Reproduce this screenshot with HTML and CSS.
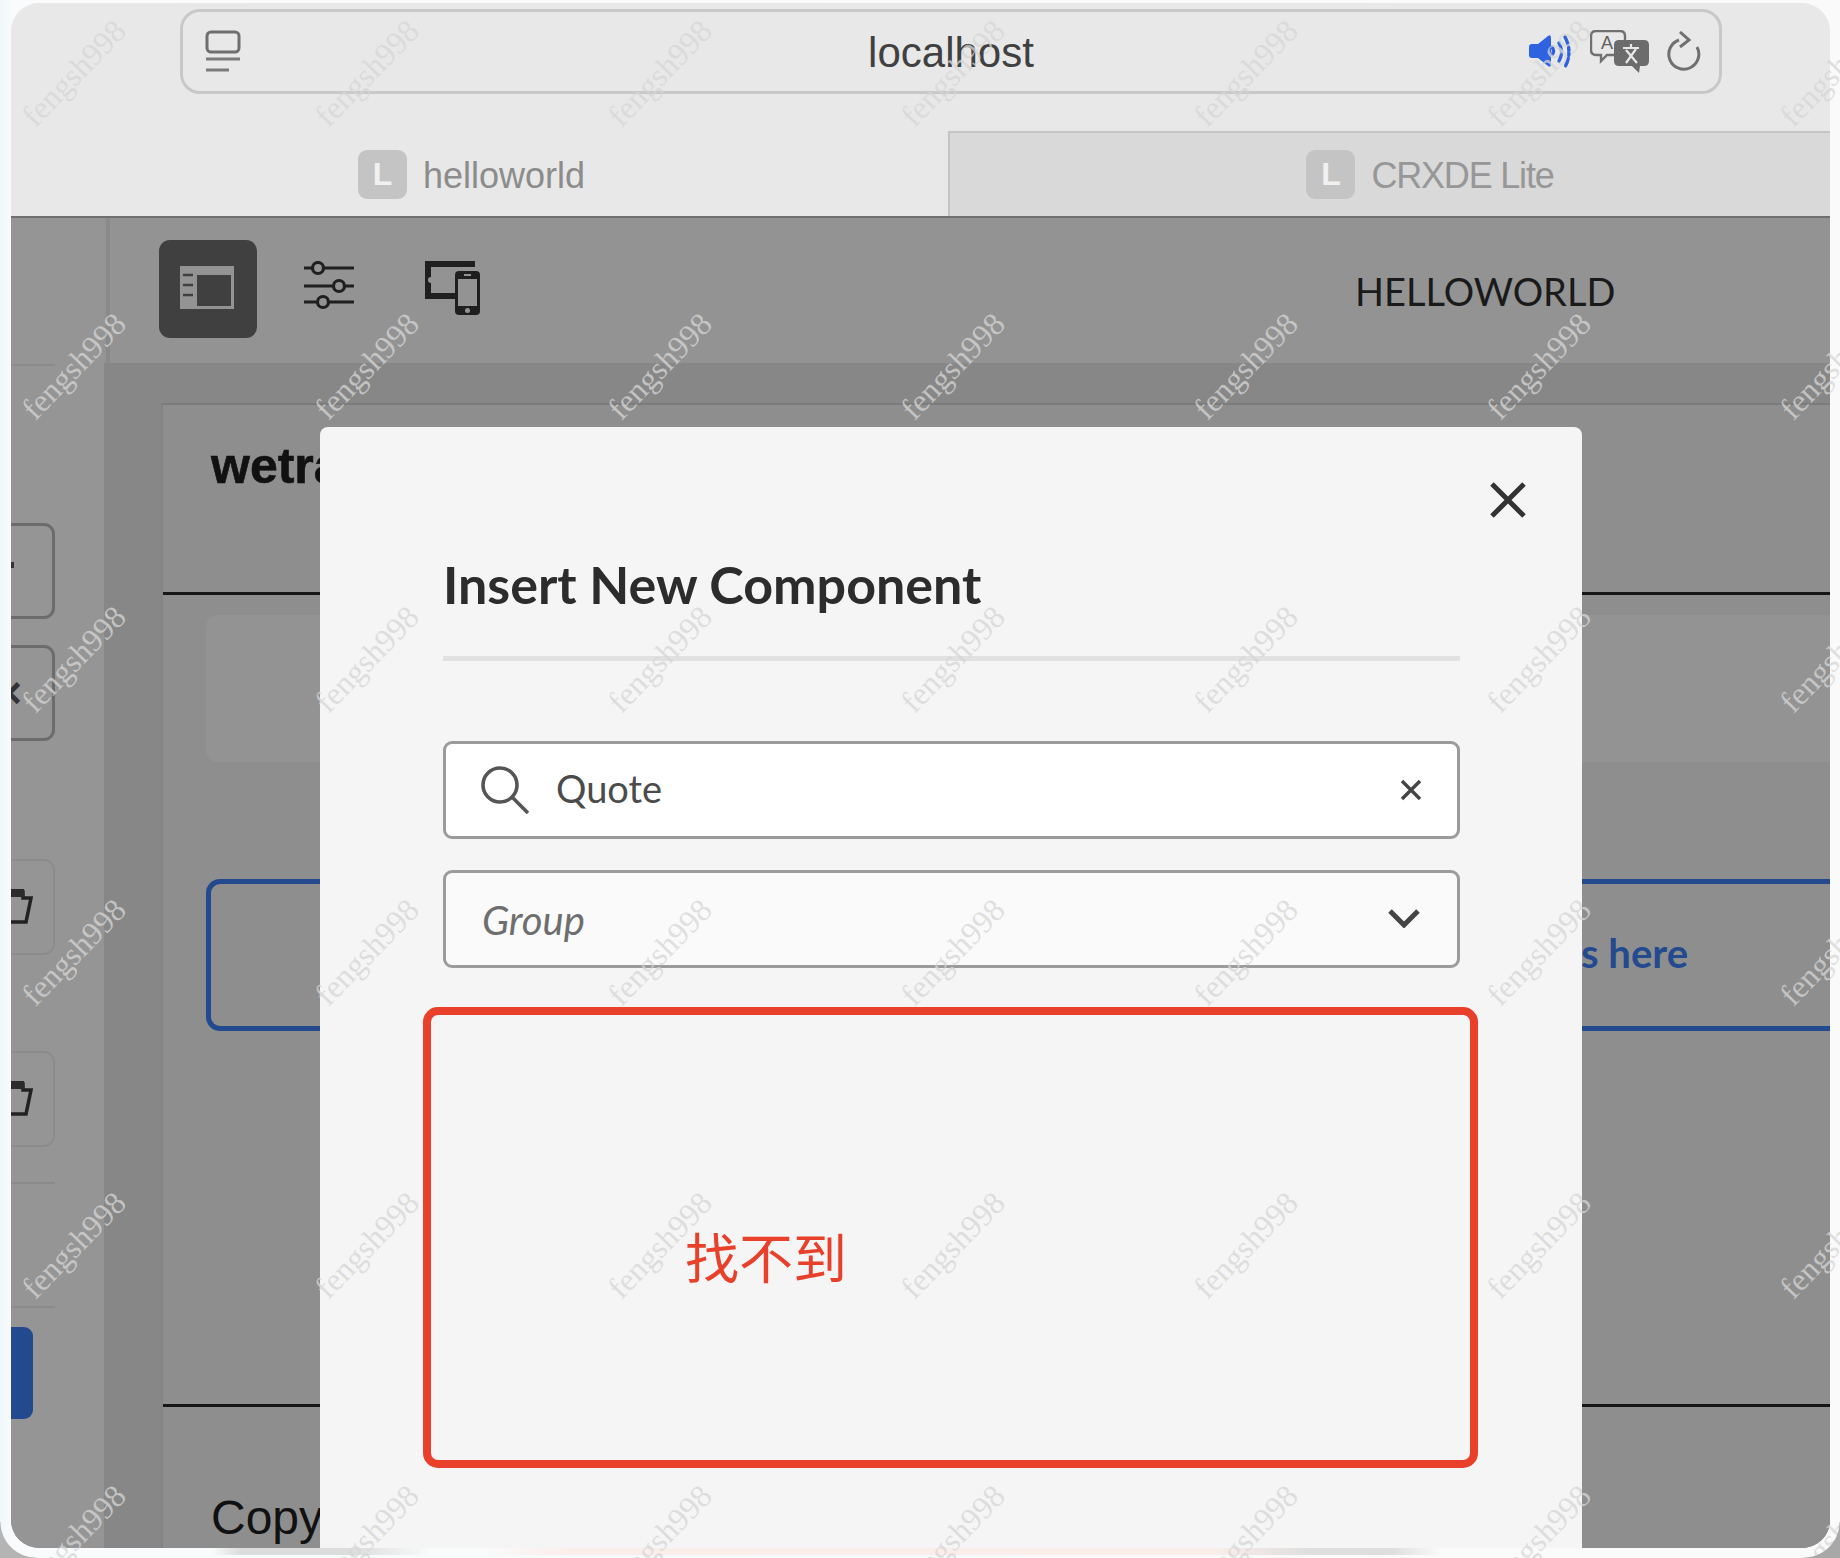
FILE: index.html
```html
<!DOCTYPE html>
<html lang="en">
<head>
<meta charset="utf-8">
<title>helloworld</title>
<link rel="stylesheet" href="styles.css">
</head>
<body>
<div class="window">
  <header class="chrome">
    <div class="urlbar">
      <svg class="ic-reader" viewBox="0 0 36 44"><rect x="2" y="2" width="32" height="20" rx="4" fill="none" stroke="#6f6f6f" stroke-width="3"/><path d="M1 29h34M1 40h23" stroke="#7a7a7a" stroke-width="3" fill="none"/></svg>
      <span class="url">localhost</span>
      <div class="url-tools">
        <svg class="ic-sound" viewBox="0 0 44 36"><path d="M1 13q0-3 3-3h6L20 2q3-2 3 2v26q0 4-3 2L10 24H4q-3 0-3-3z" fill="#2f62e0"/><path d="M24 13q3 4 0 8M31 9q5 9 0 18M37 3q8 15 0 30" fill="none" stroke="#2f62e0" stroke-width="3.400" stroke-linecap="round" stroke-dasharray="8 3"/></svg>
        <svg class="ic-trans" viewBox="0 0 60 44"><path d="M6 1h24q5 0 5 5v14q0 5-5 5H17l-6 6v-6H6q-5 0-5-5V6q0-5 5-5z" fill="#e8e8e8" stroke="#707070" stroke-width="2.4"/><text x="11" y="19" class="trans-a">A</text><path d="M29 10h25q5 0 5 5v16q0 5-5 5h-4l-1 7-7-7H29q-5 0-5-5V15q0-5 5-5z" fill="#6c6c6c"/><path d="M33 18h16M41 14v4M36 33l10-14M36 20l11 13" stroke="#e8e8e8" stroke-width="2.2" fill="none"/></svg>
        <svg class="ic-reload" viewBox="0 0 36 42"><path d="M13 9A15 15 0 1 0 31 16" fill="none" stroke="#707070" stroke-width="3"/><path d="M14 1l9 8-9 7" fill="none" stroke="#707070" stroke-width="3"/></svg>
      </div>
    </div>
    <div class="tabs">
      <div class="tab tab-active"><span class="favicon">L</span><span class="tab-title">helloworld</span></div>
      <div class="tab tab-inactive"><span class="favicon">L</span><span class="tab-title">CRXDE Lite</span></div>
    </div>
  </header>

  <div class="app">
    <aside class="rail">
      <div class="rail-rule rail-rule-top"></div>
      <div class="rail-btn rail-btn-strong"><span class="rail-dot"></span></div>
      <div class="rail-btn rail-btn-strong rail-btn-x"><span class="rail-x">×</span></div>
      <div class="rail-btn rail-btn-soft rail-btn-first-soft"><svg class="ic-folder" viewBox="0 0 24 38"><path d="M0 4h14v6h8l-5 24H0" fill="none" stroke="#222" stroke-width="3.5"/><path d="M0 1h15v8H0z" fill="#2b2b2b"/></svg></div>
      <div class="rail-btn rail-btn-soft"><svg class="ic-folder" viewBox="0 0 24 38"><path d="M0 4h14v6h8l-5 24H0" fill="none" stroke="#222" stroke-width="3.5"/><path d="M0 1h15v8H0z" fill="#2b2b2b"/></svg></div>
      <div class="rail-rule rail-rule-a"></div>
      <div class="rail-rule rail-rule-b"></div>
      <div class="rail-primary"></div>
    </aside>

    <main class="main">
      <div class="toolbar">
        <div class="tool tool-active">
          <svg class="ic-panel" viewBox="0 0 54 43"><path fill-rule="evenodd" d="M0 0h54v43H0zM17 9v31h34V9z" fill="#939393"/><path d="M3 9h10M3 19h10M3 29h10" stroke="#404040" stroke-width="2.6"/></svg>
        </div>
        <svg class="ic-sliders" viewBox="0 0 50 50"><g fill="none" stroke="#1f1f1f" stroke-width="3.200"><path d="M0 7h50M0 25h50M0 41h50"/><circle cx="14" cy="7" r="5.5" fill="#939393"/><circle cx="35" cy="25" r="5.5" fill="#939393"/><circle cx="19" cy="41" r="5.5" fill="#939393"/></g></svg>
        <svg class="ic-devices" viewBox="0 0 56 54"><path d="M1 0h50v6H7v10a3 3 0 0 0 0 6v10h24v6H1z" fill="#1f1f1f"/><rect x="31" y="10" width="25" height="44" rx="4" fill="#1f1f1f"/><rect x="34" y="18" width="19" height="27" fill="#939393"/><rect x="40" y="13" width="7" height="2" fill="#939393"/><circle cx="43.5" cy="49.500" r="2.500" fill="#939393"/></svg>
        <span class="site-name">HELLOWORLD</span>
      </div>
      <div class="canvas">
        <section class="card">
          <div class="card-head"><h1 class="brand">wetrails</h1></div>
          <div class="card-body">
            <div class="placeholder"></div>
            <div class="dropzone"><span class="drop-text">Drag components here</span></div>
          </div>
          <footer class="card-foot">Copyright</footer>
        </section>
      </div>
    </main>

    <div class="modal">
      <svg class="ic-close" viewBox="0 0 36 36"><path d="M2 2l32 32M34 2L2 34" stroke="#333" stroke-width="5" fill="none"/></svg>
      <h2 class="modal-title">Insert New Component</h2>
      <div class="field field-search">
        <svg class="ic-search" viewBox="0 0 48 48"><circle cx="19" cy="19" r="17" fill="none" stroke="#555" stroke-width="3.600"/><path d="M31 31l16 16" stroke="#555" stroke-width="3.600"/></svg>
        <span class="field-value">Quote</span>
        <svg class="ic-clear" viewBox="0 0 22 22"><path d="M2 2l18 18M20 2L2 20" stroke="#444" stroke-width="3.400" fill="none"/></svg>
      </div>
      <div class="field field-select">
        <span class="field-hint">Group</span>
        <svg class="ic-chevron" viewBox="0 0 32 20"><path d="M2 3l14 14L30 3" stroke="#444" stroke-width="5" fill="none"/></svg>
      </div>
      <div class="annotation"><span class="annotation-text">找不到</span></div>
    </div>
  </div>
</div>
<div class="foot-strip"></div>

<div class="watermarks" aria-hidden="true">
  <span>fengsh998</span><span>fengsh998</span><span>fengsh998</span><span>fengsh998</span><span>fengsh998</span><span>fengsh998</span><span>fengsh998</span>
  <span>fengsh998</span><span>fengsh998</span><span>fengsh998</span><span>fengsh998</span><span>fengsh998</span><span>fengsh998</span><span>fengsh998</span>
  <span>fengsh998</span><span>fengsh998</span><span>fengsh998</span><span>fengsh998</span><span>fengsh998</span><span>fengsh998</span><span>fengsh998</span>
  <span>fengsh998</span><span>fengsh998</span><span>fengsh998</span><span>fengsh998</span><span>fengsh998</span><span>fengsh998</span><span>fengsh998</span>
  <span>fengsh998</span><span>fengsh998</span><span>fengsh998</span><span>fengsh998</span><span>fengsh998</span><span>fengsh998</span><span>fengsh998</span>
  <span>fengsh998</span><span>fengsh998</span><span>fengsh998</span><span>fengsh998</span><span>fengsh998</span><span>fengsh998</span><span>fengsh998</span>
</div>
</body>
</html>
```
FILE: styles.css
```css
* { box-sizing: border-box; }
html, body { margin: 0; padding: 0; }
body {
  position: relative;
  width: 1840px;
  height: 1558px;
  overflow: hidden;
  background: linear-gradient(90deg, #eef7fc 0, #f9fbfc 11px, #fafafa 100%);
  font-family: "Liberation Sans", sans-serif;
}
body::before, body::after {
  content: "";
  position: absolute;
  bottom: 0;
  width: 36px;
  height: 36px;
}
body::before { left: 0; background: radial-gradient(circle at 100% 0, transparent 35px, #b4b4b4 36px); }
body::after { right: 0; background: radial-gradient(circle at 0 0, transparent 35px, #a8a8a8 36px); }

.window {
  margin: 3px 10px 0 11px;
  height: 1545px;
  border-radius: 28px;
  overflow: hidden;
  display: flex;
  flex-direction: column;
  position: relative;
}

.chrome { height: 215px; background: #e8e8e8; border-bottom: 2px solid #6f6f6f; flex: none; }
.urlbar {
  margin: 6px 108px 0 169px;
  height: 85px;
  border: 3px solid #c8c8c8;
  border-radius: 20px;
  display: flex;
  align-items: center;
  position: relative;
  padding: 0 17px 0 22px;
}
.ic-reader { width: 36px; height: 44px; }
.url {
  position: absolute;
  left: 0; right: 0;
  text-align: center;
  font-size: 42px;
  color: #404040;
  margin-top: 2px;
}
.url-tools { margin-left: auto; display: flex; align-items: center; gap: 16px; position: relative; }
.ic-sound { width: 44px; height: 36px; margin-right: 2px; }
.ic-trans { width: 60px; height: 44px; }
.ic-reload { width: 36px; height: 42px; }
.trans-a { font: 18px "Liberation Sans", sans-serif; fill: #606060; }

.tabs { display: flex; height: 85px; margin-top: 37px; }
.tab { height: 85px; display: flex; align-items: center; justify-content: center; gap: 16px; }
.tab-active { width: 937px; padding: 2px 16px 0 0; }
.tab-inactive { flex: 1; background: #d9d9d9; border-top: 2px solid #c4c4c4; border-left: 2px solid #c4c4c4; padding-left: 80px; }
.favicon {
  width: 49px; height: 49px;
  border-radius: 9px;
  background: #c4c4c4;
  color: #f1f1f1;
  font-size: 32px;
  font-weight: 700;
  display: flex; align-items: center; justify-content: center;
}
.tab-title { font-size: 36px; color: #8c8c8c; margin-top: 2px; }
.tab-inactive .tab-title { color: #979797; letter-spacing: -1.2px; }

.app { flex: 1; display: flex; position: relative; min-height: 0; background: #939393; }

.rail { width: 93px; flex: none; background: #959595; overflow: hidden; padding-top: 146px; }
.rail-rule { height: 2px; background: #8a8a8a; width: 44px; }
.rail-rule-top { margin-bottom: 157px; }
.rail-btn { width: 84px; height: 96px; margin-left: -40px; border-radius: 11px; display: flex; align-items: center; justify-content: flex-end; }
.rail-btn-strong { border: 3px solid #6c6c6c; margin-bottom: 26px; }
.rail-btn-soft { border: 2px solid #8c8c8c; position: relative; }
.rail-btn-first-soft { margin-top: 118px; margin-bottom: 96px; }
.rail-dot { width: 3px; height: 6px; background: #333; margin-right: 38px; margin-top: -12px; }
.rail-x { font-size: 44px; font-weight: 700; color: #333; margin-right: 30px; line-height: 1; }
.ic-folder { width: 24px; height: 38px; margin-right: 20px; position: relative; }
.rail-rule-a { margin-top: 35px; }
.rail-rule-b { margin-top: 122px; }
.rail-primary { width: 22px; height: 92px; background: #234a8f; border-radius: 0 9px 9px 0; margin-top: 19px; }

.main { flex: 1; min-width: 0; display: flex; flex-direction: column; }
.toolbar {
  height: 145px;
  flex: none;
  background: #939393;
  border-left: 4px solid #8a8a8a;
  margin-left: 2px;
  display: flex;
  align-items: center;
  position: relative;
  padding-left: 49px;
}
.tool { width: 98px; height: 98px; border-radius: 11px; display: flex; align-items: center; justify-content: center; margin-top: -3px; }
.tool-active { background: #404040; }
.ic-panel { width: 54px; height: 43px; margin-top: -4px; margin-left: 7px; margin-right: 10px; }
.ic-sliders { width: 50px; height: 50px; margin-left: 47px; margin-top: -9px; }
.ic-devices { width: 56px; height: 54px; margin-left: 70px; margin-top: -5px; }
.site-name {
  position: absolute;
  left: 1245px;
  top: 50%;
  transform: translateY(-50%);
  font-family: "Lato", sans-serif;
  font-size: 38px;
  color: #1a1a1a;
  white-space: nowrap;
}

.canvas { flex: 1; min-height: 0; background: #878787; padding: 40px 0 0 57px; overflow: hidden; }
.card { height: 100%; background: #8e8e8e; border-top: 2px solid #7b7b7b; border-left: 2px solid #838383; display: flex; flex-direction: column; }
.card-head { height: 190px; flex: none; border-bottom: 3px solid #161616; padding: 36px 0 0 48px; }
.brand { margin: 0; font-size: 50px; font-weight: 700; color: #111; line-height: 1; -webkit-text-stroke: 0.6px #111; }
.card-body { height: 809px; flex: none; padding: 20px 0 0 43px; }
.placeholder { height: 147px; background: #939393; border-radius: 12px 0 0 12px; }
.dropzone {
  margin-top: 117px;
  height: 152px;
  border: 5px solid #234a8f;
  border-right: 0;
  border-radius: 14px 0 0 14px;
  display: flex;
  align-items: center;
  justify-content: flex-end;
  padding-right: 142px;
}
.drop-text { font-family: "Lato", sans-serif; font-size: 40px; font-weight: 700; color: #234a8f; white-space: nowrap; margin-top: -4px; }
.card-foot { border-top: 3px solid #161616; padding: 83px 0 0 48px; font-size: 48px; color: #111; line-height: 56px; }

.modal {
  position: absolute;
  left: 309px;
  top: 209px;
  width: 1262px;
  bottom: 0;
  background: #f5f5f5;
  border-radius: 8px 8px 0 0;
  padding: 0 122px 0 123px;
}
.ic-close { position: absolute; left: 1170px; top: 55px; width: 36px; height: 36px; }
.modal-title {
  margin: 0;
  padding-top: 124px;
  padding-bottom: 39px;
  border-bottom: 5px solid #e1e1e1;
  font-family: "Lato", sans-serif;
  font-size: 52px;
  line-height: 66px;
  font-weight: 700;
  color: #2c2c2c;
}
.field {
  height: 98px;
  border: 3px solid #9b9b9b;
  border-radius: 9px;
  display: flex;
  align-items: center;
  font-family: "Lato", sans-serif;
}
.field-search { margin-top: 80px; background: #fff; padding: 0 35px; color: #4b4b4b; font-size: 38px; }
.ic-search { width: 48px; height: 48px; flex: none; }
.field-value { margin-left: 27px; margin-top: -4px; }
.ic-clear { width: 22px; height: 22px; margin-left: auto; }
.field-select { margin-top: 31px; background: #fafafa; padding: 0 37px 0 36px; font-size: 40px; }
.field-hint { font-style: italic; color: #6e6e6e; margin-top: 2px; }
.ic-chevron { width: 32px; height: 20px; margin-left: auto; margin-top: -2px; }

.annotation {
  position: absolute;
  left: 103px;
  top: 580px;
  width: 1055px;
  height: 461px;
  border: 8px solid #e8402a;
  border-radius: 15px;
}
.annotation-text {
  position: absolute;
  left: 254px;
  top: 211px;
  font-family: "Noto Sans CJK SC", sans-serif;
  font-size: 54px;
  line-height: 60px;
  color: #e8402a;
  white-space: nowrap;
}

.foot-strip {
  height: 7px;
  margin: 0 10px 0 11px;
  background: linear-gradient(90deg, transparent 200px, #dcdcdc 230px, #dcdcdc 340px, transparent 420px, transparent 470px, #fbeeea 560px, #fbeeea 1200px, #dedede 1300px, #dedede 1380px, transparent 1430px);
}

.watermarks {
  position: absolute;
  left: -73px;
  top: -74px;
  display: grid;
  grid-template-columns: repeat(7, 293px);
  grid-auto-rows: 293px;
  pointer-events: none;
}
.watermarks span {
  place-self: center;
  font-family: "Liberation Serif", serif;
  font-size: 32px;
  line-height: 1;
  color: rgba(214, 214, 214, 0.75);
  transform: rotate(-46deg);
  white-space: nowrap;
}
```
